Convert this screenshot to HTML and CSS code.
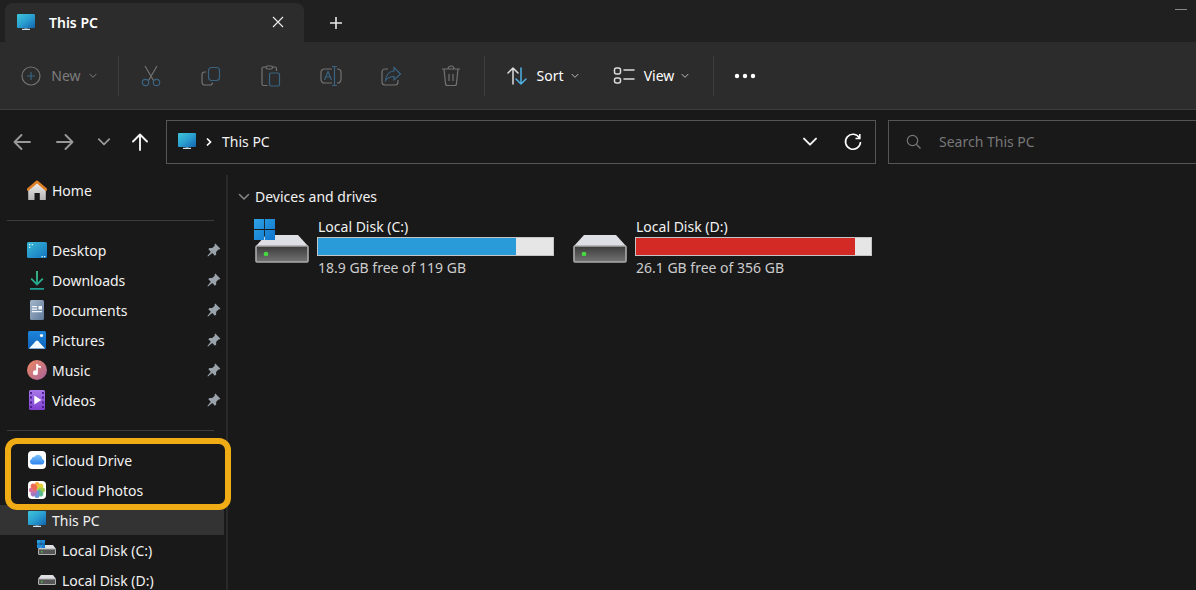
FILE: index.html
```html
<!DOCTYPE html>
<html lang="en">
<head>
<meta charset="utf-8">
<title>This PC</title>
<link rel="stylesheet" href="styles.css">
</head>
<body>
<svg class="defs" aria-hidden="true">
  <defs>
    <linearGradient id="gScreen" x1="0" y1="0" x2="1" y2="1"><stop offset="0" stop-color="#3fc6d8"/><stop offset=".5" stop-color="#2a9fd0"/><stop offset="1" stop-color="#1263b0"/></linearGradient>
    <linearGradient id="gDesk" x1="0" y1="0" x2="1" y2="1"><stop offset="0" stop-color="#38b9d6"/><stop offset="1" stop-color="#1473c0"/></linearGradient>
    <linearGradient id="gHouse" x1="0" y1="0" x2="0" y2="1"><stop offset="0" stop-color="#f4f4f4"/><stop offset="1" stop-color="#b4b4b4"/></linearGradient>
    <linearGradient id="gDoc" x1="0" y1="0" x2="1" y2="1"><stop offset="0" stop-color="#a5b6cb"/><stop offset="1" stop-color="#5f7a9a"/></linearGradient>
    <linearGradient id="gPic" x1="0" y1="0" x2="0" y2="1"><stop offset="0" stop-color="#1d86dc"/><stop offset="1" stop-color="#0f62b8"/></linearGradient>
    <linearGradient id="gMusic" x1="0" y1="0" x2="1" y2="1"><stop offset="0" stop-color="#ee8a63"/><stop offset="1" stop-color="#a8619a"/></linearGradient>
    <linearGradient id="gVideo" x1="0" y1="0" x2="0" y2="1"><stop offset="0" stop-color="#a878ea"/><stop offset="1" stop-color="#8040d0"/></linearGradient>
    <linearGradient id="gCloud" x1="0" y1="0" x2="0" y2="1"><stop offset="0" stop-color="#7cc4fa"/><stop offset="1" stop-color="#2f83ee"/></linearGradient>
    <linearGradient id="gDown" x1="0" y1="0" x2="0" y2="1"><stop offset="0" stop-color="#3cc48c"/><stop offset="1" stop-color="#1a9c93"/></linearGradient>
    <linearGradient id="gBody" x1="0" y1="0" x2="0" y2="1"><stop offset="0" stop-color="#3a3a3a"/><stop offset="1" stop-color="#747474"/></linearGradient>
    <linearGradient id="gWin" x1="0" y1="0" x2="1" y2="1"><stop offset="0" stop-color="#2ea3e6"/><stop offset="1" stop-color="#0f74cc"/></linearGradient>
  </defs>
  <symbol id="pc" viewBox="0 0 20 20"><rect x="1" y="1" width="18" height="14" rx="1" fill="url(#gScreen)"/><path d="M8.500 15h3v1h-3z" fill="#5a8aa8"/><path d="M6 15.800h8V17H6z" fill="#cfe0ea"/></symbol>
  <symbol id="home" viewBox="0 0 20 20"><path d="M1.200 9 10 1.500 18.800 9v11h-6v-7h-5.300v7H1.200z" fill="url(#gHouse)"/><path d="M1 9.500 10 1.800l9 7.700" fill="none" stroke="#df8128" stroke-width="2.600" stroke-linecap="round" stroke-linejoin="round"/></symbol>
  <symbol id="desktop" viewBox="0 0 20 20"><rect y="2" width="20" height="16" rx="1.500" fill="url(#gDesk)"/><path d="M2 4h1.300v1.300H2zM2 6.700h1.300V8H2zM4.700 4H6v1.300H4.700zM14.500 16h1.300v1.200h-1.300zM17 16h1.300v1.200H17z" fill="#d6f5ff"/></symbol>
  <symbol id="download" viewBox="0 0 20 20"><path d="M9.100 1h1.800v11.300l4.300-4.300 1.200 1.200L10 15.700 3.600 9.200 4.800 8l4.300 4.300zM3 18h14v1.800H3z" fill="url(#gDown)"/></symbol>
  <symbol id="document" viewBox="0 0 20 20"><rect x="3" width="14" height="20" rx="1.500" fill="url(#gDoc)"/><path d="M5 6h5v1.200H5zM5 8.500h5v1.200H5zM5 11h10v1.200H5zM11.500 6H15v3.500h-3.500z" fill="#f1f6fb"/></symbol>
  <symbol id="picture" viewBox="0 0 20 20"><rect x="1" y="1" width="18" height="18" rx="1.500" fill="url(#gPic)"/><path d="m2 18.500 6.700-7.300q1.300-1.200 2.600 0L18 18.500z" fill="#f3fbff"/><circle cx="14.500" cy="5.500" r="1.600" fill="#fff"/></symbol>
  <symbol id="music" viewBox="0 0 20 20"><circle cx="10" cy="10" r="10" fill="url(#gMusic)"/><path d="M9.200 4h1.500c.2 1.800 1.700 2 3.100 2v2.200c-1.200 0-2.300-.4-2.900-.9v5.200A2.500 2.500 0 1 1 9.200 10.400z" fill="#fff"/></symbol>
  <symbol id="video" viewBox="0 0 20 20"><rect x="2" width="16" height="20" rx="1.500" fill="url(#gVideo)"/><path d="M3 2h2v2H3zM3 6.500h2v2H3zM3 11.500h2v2H3zM3 16h2v2H3zM15 2h2v2h-2zM15 6.500h2v2h-2zM15 11.500h2v2h-2zM15 16h2v2h-2z" fill="#4a2090"/><path d="m7.300 5.500 7 4.500-7 4.500z" fill="#fff"/></symbol>
  <symbol id="icloud" viewBox="0 0 20 20"><rect x="1" y="1" width="18" height="18" rx="4" fill="#fff"/><path d="M5.500 14.500a3 3 0 0 1-.6-5.800 2.300 2.300 0 0 1 2.600-2 4.200 4.200 0 0 1 7.700 2.200 2.900 2.900 0 0 1 0 5.600z" fill="url(#gCloud)"/></symbol>
  <symbol id="photos" viewBox="0 0 20 20"><rect x="1" y="1" width="18" height="18" rx="4" fill="#fff"/><g opacity=".85"><rect x="7.500" y="2" width="5" height="7.500" rx="2.500" fill="#f79a1c"/><rect x="7.500" y="2" width="5" height="7.500" rx="2.500" fill="#e5c518" transform="rotate(45 10 10)"/><rect x="7.500" y="2" width="5" height="7.500" rx="2.500" fill="#98c42e" transform="rotate(90 10 10)"/><rect x="7.500" y="2" width="5" height="7.500" rx="2.500" fill="#3fae78" transform="rotate(135 10 10)"/><rect x="7.500" y="2" width="5" height="7.500" rx="2.500" fill="#4c86cf" transform="rotate(180 10 10)"/><rect x="7.500" y="2" width="5" height="7.500" rx="2.500" fill="#9561b4" transform="rotate(225 10 10)"/><rect x="7.500" y="2" width="5" height="7.500" rx="2.500" fill="#d2568e" transform="rotate(270 10 10)"/><rect x="7.500" y="2" width="5" height="7.500" rx="2.500" fill="#eb5138" transform="rotate(315 10 10)"/></g></symbol>
  <symbol id="pin" viewBox="0 0 14 14"><path d="m8.300.6 5.100 5.100-1.100.8-.9-.1-2.300 2.500.1 2.700-1.300 1.100-2.600-2.600L1 13.500l-.6-.5 3.400-4.300L1.300 6.200l1.200-1.200 2.700.1 2.500-2.400-.1-1.100z" fill="#9aa3ab"/></symbol>
  <symbol id="disk" viewBox="0 0 56 46"><path d="M12 16h32l10 11H2z" fill="#dedfe4"/><rect x="2" y="27" width="52" height="16" rx="1" fill="url(#gBody)" stroke="#aaa" stroke-width="1.600"/><circle cx="12" cy="35" r="2.300" fill="#43da3f"/></symbol>
  <symbol id="win" viewBox="0 0 20 20"><path d="M0 0h9.600v9.600H0zM10.400 0H20v9.600h-9.600zM0 10.400h9.600V20H0zM10.400 10.400H20V20h-9.600z" fill="url(#gWin)"/></symbol>
  <symbol id="smalldisk" viewBox="0 0 20 20"><path d="M4 5h12l3 4H1z" fill="#dedfe3"/><rect x="1.500" y="9" width="17" height="5.500" rx=".5" fill="#555" stroke="#b0b0b0"/><path d="M4 11.300h1.500v1.200H4z" fill="#43da3f"/></symbol>
  <symbol id="chev" viewBox="0 0 12 12"><path d="m1.500 3.500 4.500 4.500 4.500-4.500" fill="none" stroke="currentColor" stroke-width="1.500" stroke-linecap="round" stroke-linejoin="round"/></symbol>
  <symbol id="arrow" viewBox="0 0 20 20"><path d="M18 10H2.500M9.500 3l-7 7 7 7" fill="none" stroke="currentColor" stroke-width="1.900" stroke-linecap="round" stroke-linejoin="round"/></symbol>
</svg>

<div class="window">
  <header class="tabs">
    <div class="tab">
      <svg class="icon"><use href="#pc"/></svg>
      <span class="tab-title">This PC</span>
      <button class="plain" aria-label="Close tab"><svg class="close" viewBox="0 0 12 12"><path d="m1 1 10 10M11 1 1 11"/></svg></button>
    </div>
    <button class="plain add" aria-label="New tab"><svg class="plus" viewBox="0 0 12 12"><path d="M6 0v12M0 6h12"/></svg></button>
    <button class="plain minimize" aria-label="Minimize"><span class="minus"></span></button>
  </header>

  <div class="toolbar" role="toolbar" aria-label="Commands">
    <button class="plain command new" disabled>
      <svg class="icon line" viewBox="0 0 20 20"><circle cx="10" cy="10" r="9"/><path class="blue" d="M10 6v8M6 10h8"/></svg>
      <span>New</span><svg class="caret"><use href="#chev"/></svg>
    </button>
    <span class="rule"></span>
    <div class="actions">
      <button class="plain" aria-label="Cut" disabled><svg class="tool line" viewBox="0 0 22 22"><path d="m5 1 8.500 14.500M17 1 8.500 15.500"/><g class="blue"><circle cx="5.500" cy="17.500" r="3.200"/><circle cx="16.500" cy="17.500" r="3.200"/></g></svg></button>
      <button class="plain" aria-label="Copy" disabled><svg class="tool line" viewBox="0 0 22 22"><path d="M6 7H4.500A2.500 2.500 0 0 0 2 9.500v7.800A2.700 2.700 0 0 0 4.700 20H10a2.500 2.500 0 0 0 2.500-2.500"/><rect class="blue" x="8.500" y="2.500" width="11" height="13" rx="3"/></svg></button>
      <button class="plain" aria-label="Paste" disabled><svg class="tool line" viewBox="0 0 22 22"><path d="M7.500 20.500h-4A1.500 1.500 0 0 1 2 19V3.500A1.500 1.500 0 0 1 3.500 2H6m6 0h3a1.500 1.500 0 0 1 1.500 1.500V6"/><rect x="6" y="1" width="6.500" height="3" rx="1.500"/><rect class="blue" x="9.500" y="8" width="10" height="13" rx="1.500"/></svg></button>
      <button class="plain" aria-label="Rename" disabled><svg class="tool line" viewBox="0 0 22 22"><path d="M12 18H4.500A3.500 3.500 0 0 1 1 14.500v-7A3.500 3.500 0 0 1 4.500 4H12m5 0h.5A3.500 3.500 0 0 1 21 7.500v7a3.500 3.500 0 0 1-3.500 3.500H17"/><path class="blue" d="m4.500 15 3.500-8.500 3.500 8.500M5.700 12h4.600M12 1.500h5M12 20.500h5M14.500 1.500v19"/></svg></button>
      <button class="plain" aria-label="Share" disabled><svg class="tool line" viewBox="0 0 22 22"><path d="M8 4H5a3 3 0 0 0-3 3v10a3 3 0 0 0 3 3h10a3 3 0 0 0 3-3v-2"/><path class="blue" d="M14 2.500 20.500 9 14 15v-3.500c-4.500 0-6.500 1.500-8.500 4 .5-5.500 3.500-9 8.500-9.500z"/></svg></button>
      <button class="plain" aria-label="Delete" disabled><svg class="tool line" viewBox="0 0 22 22"><path d="M2 4h18M4 4l1.500 14.500A2 2 0 0 0 7.500 20.500h7a2 2 0 0 0 2-2L18 4M8 4a3 3 0 0 1 6 0M9 9v7M13 9v7"/></svg></button>
    </div>
    <span class="rule"></span>
    <button class="plain command sort">
      <svg class="tool lit" viewBox="0 0 22 22"><path d="M7 19V3M2 8l5-5 5 5"/><path class="sky" d="M15 3v16M10 14l5 5 5-5"/></svg>
      <span>Sort</span><svg class="caret"><use href="#chev"/></svg>
    </button>
    <button class="plain command view">
      <svg class="tool lit" viewBox="0 0 22 22"><rect x="1.500" y="3" width="6" height="6" rx="2"/><rect x="1.500" y="13" width="6" height="5" rx="2"/><path d="M11 5h10M11 14h10"/></svg>
      <span>View</span><svg class="caret"><use href="#chev"/></svg>
    </button>
    <span class="rule"></span>
    <button class="plain more" aria-label="See more"><svg class="dots" viewBox="0 0 22 6"><circle cx="3" cy="3" r="2.200"/><circle cx="11" cy="3" r="2.200"/><circle cx="19" cy="3" r="2.200"/></svg></button>
  </div>

  <nav class="navigation" aria-label="Navigation">
    <div class="history">
      <button class="plain dim" aria-label="Back"><svg class="icon"><use href="#arrow"/></svg></button>
      <button class="plain dim" aria-label="Forward"><svg class="icon forward"><use href="#arrow"/></svg></button>
      <button class="plain dim narrow" aria-label="Recent locations"><svg class="chevron"><use href="#chev"/></svg></button>
      <button class="plain narrow" aria-label="Up"><svg class="icon up"><use href="#arrow"/></svg></button>
    </div>
    <div class="address">
      <svg class="icon"><use href="#pc"/></svg>
      <svg class="crumb" viewBox="0 0 8 10"><path d="m2 1.500 3.500 3.500L2 8.500"/></svg>
      <a class="place" href="#">This PC</a>
      <button class="plain" aria-label="Previous locations"><svg class="chevron"><use href="#chev"/></svg></button>
      <button class="plain" aria-label="Refresh"><svg class="icon refresh" viewBox="0 0 20 20"><path d="M16.500 6A7.500 7.500 0 1 0 17.500 10M16.800 2v4.500H12.500"/></svg></button>
    </div>
    <label class="search">
      <svg class="glass" viewBox="0 0 16 16"><circle cx="6.500" cy="6.500" r="5.200"/><path d="m10.500 10.500 4 4"/></svg>
      <input type="search" placeholder="Search This PC" aria-label="Search This PC">
    </label>
  </nav>

  <div class="content">
    <aside class="sidebar">
      <a class="item" href="#"><svg class="icon"><use href="#home"/></svg><span>Home</span></a>
      <hr>
      <a class="item" href="#"><svg class="icon"><use href="#desktop"/></svg><span>Desktop</span><svg class="pin"><use href="#pin"/></svg></a>
      <a class="item" href="#"><svg class="icon"><use href="#download"/></svg><span>Downloads</span><svg class="pin"><use href="#pin"/></svg></a>
      <a class="item" href="#"><svg class="icon"><use href="#document"/></svg><span>Documents</span><svg class="pin"><use href="#pin"/></svg></a>
      <a class="item" href="#"><svg class="icon"><use href="#picture"/></svg><span>Pictures</span><svg class="pin"><use href="#pin"/></svg></a>
      <a class="item" href="#"><svg class="icon"><use href="#music"/></svg><span>Music</span><svg class="pin"><use href="#pin"/></svg></a>
      <a class="item" href="#"><svg class="icon"><use href="#video"/></svg><span>Videos</span><svg class="pin"><use href="#pin"/></svg></a>
      <hr>
      <div class="marked">
        <a class="item" href="#"><svg class="icon"><use href="#icloud"/></svg><span>iCloud Drive</span></a>
        <a class="item" href="#"><svg class="icon"><use href="#photos"/></svg><span>iCloud Photos</span></a>
      </div>
      <a class="item selected" href="#"><svg class="icon"><use href="#pc"/></svg><span>This PC</span></a>
      <a class="item child" href="#"><svg class="icon"><use href="#smalldisk"/><use href="#win" width="8" height="8"/></svg><span>Local Disk (C:)</span></a>
      <a class="item child" href="#"><svg class="icon"><use href="#smalldisk"/></svg><span>Local Disk (D:)</span></a>
    </aside>
    <main class="files">
      <h2 class="group"><svg class="caret"><use href="#chev"/></svg>Devices and drives</h2>
      <div class="drives">
        <div class="drive">
          <svg class="disk" viewBox="0 0 56 46"><use href="#disk"/><use href="#win" width="21" height="21"/></svg>
          <div class="info">
            <label for="c">Local Disk (C:)</label>
            <progress id="c" max="1000" value="843"></progress>
            <span class="free">18.9 GB free of 119 GB</span>
          </div>
        </div>
        <div class="drive">
          <svg class="disk" viewBox="0 0 56 46"><use href="#disk"/></svg>
          <div class="info">
            <label for="d">Local Disk (D:)</label>
            <progress id="d" class="full" max="1000" value="932"></progress>
            <span class="free">26.1 GB free of 356 GB</span>
          </div>
        </div>
      </div>
    </main>
  </div>
</div>
</body>
</html>
```
FILE: styles.css
```css
* { box-sizing: border-box; }
body {
  margin: 0;
  background: #191919;
  color: #f2f2f2;
  font: 14px/20px "Noto Sans", "Open Sans", sans-serif;
  overflow: hidden;
}
.defs { position: absolute; width: 0; height: 0; }
.window { display: flex; flex-direction: column; height: 100vh; }
svg { display: block; flex: none; }
a { color: inherit; text-decoration: none; }
.plain {
  display: flex;
  align-items: center;
  justify-content: center;
  margin: 0;
  padding: 0;
  border: 0;
  background: none;
  color: inherit;
  font: inherit;
}
.icon { width: 20px; height: 20px; }
.tool { width: 22px; height: 22px; }
.caret { width: 8px; height: 8px; }
.chevron { width: 16px; height: 16px; }

.tabs { display: flex; height: 42px; padding-left: 5px; background: #202020; }
.tab {
  display: flex;
  align-items: center;
  width: 299px;
  margin-top: 3px;
  padding: 0 20px 0 11px;
  border-radius: 8px 8px 0 0;
  background: #2c2c2c;
}
.tab-title { flex: 1; margin-left: 13px; color: #fff; font-weight: 600; }
.close { width: 12px; height: 12px; margin-bottom: 2px; fill: none; stroke: #e8e8e8; stroke-width: 1.2; }
.add { width: 64px; padding-top: 4px; }
.plus { width: 12px; height: 12px; fill: none; stroke: #e8e8e8; stroke-width: 1.6; }
.minimize { align-items: flex-start; margin-left: auto; padding: 9px 9px 0 0; }
.minus { width: 12px; height: 1px; background: #888; }

.toolbar {
  display: flex;
  align-items: center;
  height: 68px;
  background: #2c2c2c;
  border-bottom: 1px solid #3b3b3b;
}
.rule { width: 1px; height: 40px; background: #3e3e3e; }
.command { gap: 9px; color: #fff; }
.command span { padding-top: 1px; }
.command .caret { margin-left: -2px; color: #bbb; }
.new { width: 118px; gap: 10px; color: #7d7d7d; }
.new .caret { color: #7d7d7d; }
.line { fill: none; stroke: #737373; stroke-width: 1.2; }
.blue { stroke: #3a6482; }
.lit { fill: none; stroke: #ddd; stroke-width: 1.5; stroke-linecap: round; stroke-linejoin: round; }
.sky { stroke: #4fb0e4; }
.actions { display: flex; width: 365px; padding-left: 2px; }
.actions .plain { width: 60px; height: 40px; }
.sort { width: 114px; }
.view { width: 114px; padding-right: 10px; }
.more { width: 62px; }
.dots { width: 22px; height: 6px; fill: #fff; }

.navigation { display: flex; align-items: center; padding: 10px 0 11px; }
.history { display: flex; width: 166px; padding-right: 8px; }
.history .plain { width: 43px; height: 44px; }
.history .narrow { width: 36px; }
.dim { color: #999; }
.history .chevron { width: 14px; height: 14px; }
.forward { transform: rotate(180deg); }
.up { transform: rotate(90deg); }
.address, .search {
  display: flex;
  align-items: center;
  height: 44px;
  border: 1px solid #555;
}
.address { flex: 1; padding-left: 10px; padding-right: 1px; }
.crumb { width: 8px; height: 10px; margin: 0 9px 0 8px; fill: none; stroke: #fff; stroke-width: 1.7; }
.place { flex: 1; }
.address .plain { width: 43px; height: 42px; }
.refresh { fill: none; stroke: #fff; stroke-width: 1.6; }
.search { width: 308px; margin-left: 12px; padding-left: 17px; border-right: 0; }
.glass { width: 16px; height: 16px; fill: none; stroke: #777; stroke-width: 1.2; }
.search input {
  flex: 1;
  min-width: 0;
  margin-left: 17px;
  padding: 0;
  border: 0;
  outline: 0;
  background: none;
  color: #fff;
  font: inherit;
}
.search input::placeholder { color: #777; }

.content { display: flex; flex: 1; min-height: 0; }
.sidebar { width: 228px; border-right: 2px solid #292929; }
.item {
  display: flex;
  align-items: center;
  height: 30px;
  margin-right: 2px;
  padding: 0 3px 0 27px;
  gap: 5px;
}
.item span { flex: 1; padding-top: 2px; }
.child { padding-left: 37px; }
.selected { background: #333; }
.pin { width: 14px; height: 14px; }
hr { height: 1px; margin: 15px 12px 14px 7px; border: 0; background: #3c3c3c; }
.marked { position: relative; }
.marked::after {
  content: "";
  position: absolute;
  inset: -7px -5px -5px 5px;
  border: 6px solid #f0ac14;
  border-radius: 12px;
  pointer-events: none;
}

.files { flex: 1; padding: 12px 10px; }
.group { display: flex; align-items: center; gap: 5px; margin: 0; font: inherit; }
.group .caret { width: 12px; height: 12px; color: #888; }
.drives { display: grid; grid-template-columns: repeat(auto-fill, 318px); padding-left: 16px; }
.drive { display: flex; gap: 7px; padding-top: 10px; }
.disk { width: 56px; height: 46px; margin-top: 2px; }
.info { display: flex; flex-direction: column; width: 237px; }
.info label, .free { padding-left: 1px; }
.free { margin-top: 2px; color: #ccc; }
progress {
  appearance: none;
  width: 100%;
  height: 19px;
  border: 1px solid #c4c4c4;
  background: #e6e6e6;
}
progress::-webkit-progress-bar { background: #e6e6e6; }
progress::-webkit-progress-value { background: #2a9bd9; }
.full::-webkit-progress-value { background: #d32a26; }
```
